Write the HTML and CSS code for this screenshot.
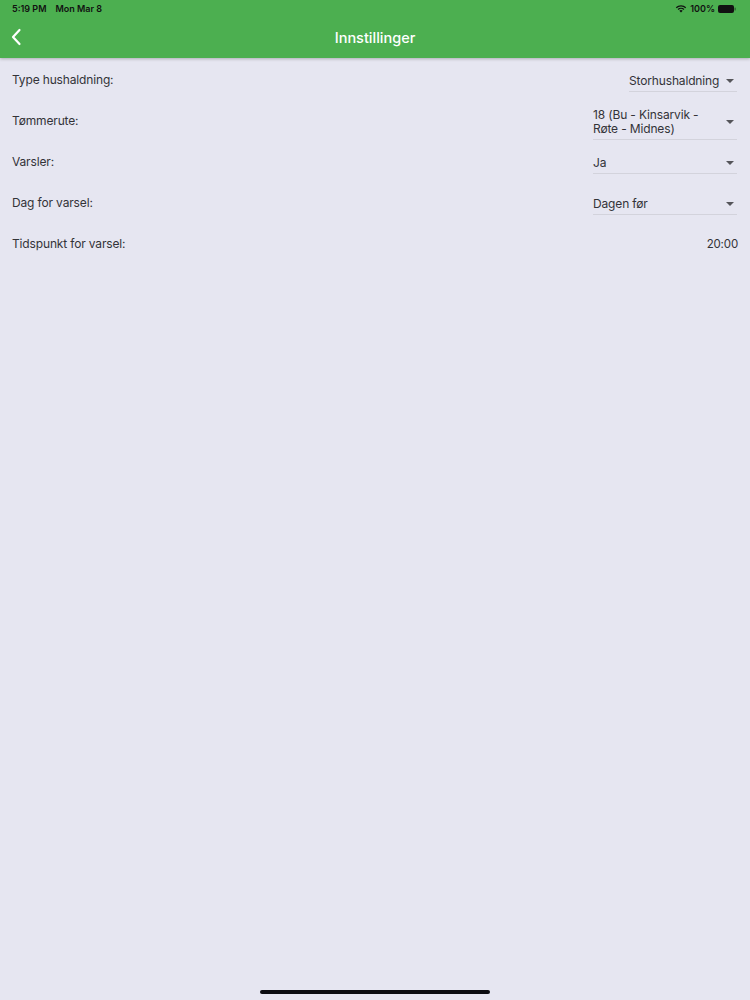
FILE: index.html
```html
<!DOCTYPE html>
<html lang="no">
<head>
<meta charset="utf-8">
<title>Innstillinger</title>
<link rel="stylesheet" href="styles.css">
</head>
<body>
<header class="top">
  <div class="status">
    <div class="status-left"><span>5:19 PM</span><span class="date">Mon Mar 8</span></div>
    <div class="status-right">
      <svg class="wifi" width="12" height="9" viewBox="0 0 12 9"><path d="M6 8.6 L4.3 6.8 A2.4 2.4 0 0 1 7.7 6.8 Z" fill="#111"/><path d="M2.6 5.1 A4.8 4.8 0 0 1 9.4 5.1 L8.5 6 A3.5 3.5 0 0 0 3.5 6 Z" fill="#111"/><path d="M0.8 3.3 A7.4 7.4 0 0 1 11.2 3.3 L10.3 4.2 A6.1 6.1 0 0 0 1.7 4.2 Z" fill="#111"/></svg>
      <span>100%</span>
      <svg class="battery" width="18" height="8" viewBox="0 0 18 8"><rect x="0" y="0" width="16" height="8" rx="2" fill="#111"/><rect x="16.5" y="2.5" width="1.3" height="3" rx="0.6" fill="#111" opacity="0.5"/></svg>
    </div>
  </div>
  <div class="appbar">
    <svg class="back" width="12" height="18" viewBox="0 0 12 18"><path d="M9.5 2 L3 9 L9.5 16" fill="none" stroke="#fff" stroke-width="2.2" stroke-linecap="round" stroke-linejoin="round"/></svg>
    <h1 class="title">Innstillinger</h1>
  </div>
</header>
<main class="settings">
  <div class="row">
    <span class="label">Type hushaldning:</span>
    <div class="dropdown narrow"><span class="value">Storhushaldning</span><span class="arrow"></span></div>
  </div>
  <div class="row">
    <span class="label">Tømmerute:</span>
    <div class="dropdown"><span class="value">18 (Bu - Kinsarvik -<br>Røte - Midnes)</span><span class="arrow"></span></div>
  </div>
  <div class="row">
    <span class="label">Varsler:</span>
    <div class="dropdown"><span class="value">Ja</span><span class="arrow"></span></div>
  </div>
  <div class="row">
    <span class="label">Dag for varsel:</span>
    <div class="dropdown"><span class="value">Dagen før</span><span class="arrow"></span></div>
  </div>
  <div class="row">
    <span class="label">Tidspunkt for varsel:</span>
    <span class="time">20:00</span>
  </div>
</main>
<div class="home-indicator"></div>
</body>
</html>
```
FILE: styles.css
```css
html, body {
  margin: 0;
  padding: 0;
}
body {
  width: 750px;
  height: 1000px;
  background: #e6e6f1;
  font-family: "Inter", "Liberation Sans", sans-serif;
  color: #333338;
  position: relative;
  overflow: hidden;
}
.top {
  background: #4caf50;
  height: 58px;
  box-shadow: 0 1px 3px rgba(0,0,0,0.25);
  position: relative;
  z-index: 1;
}
.status {
  height: 17px;
  display: flex;
  justify-content: space-between;
  align-items: center;
  padding: 0 12px 0 12px;
  font-size: 9px;
  font-weight: 600;
  color: #111;
}
.status-left .date {
  margin-left: 9px;
}
.status-right {
  display: flex;
  align-items: center;
  gap: 3px;
  padding-right: 2px;
}
.appbar {
  height: 41px;
  display: flex;
  align-items: center;
  justify-content: center;
  position: relative;
}
.back {
  position: absolute;
  left: 10px;
  top: 11px;
}
.title {
  margin: 0;
  font-size: 14.5px;
  font-weight: 500;
  color: #fff;
}
.settings {
  display: flex;
  flex-direction: column;
  padding: 0 13px 0 12px;
}
.row {
  display: flex;
  justify-content: space-between;
  align-items: center;
  height: 41px;
  font-size: 12px;
  letter-spacing: -0.15px;
  position: relative;
  top: 1px;
}
.dropdown {
  width: 144px;
  display: flex;
  align-items: center;
  justify-content: space-between;
  border-bottom: 1px solid #d3d3dc;
  padding: 4px 0 3px 0;
  position: relative;
  top: 1px;
}
.dropdown.narrow {
  width: 108px;
}
.value {
  line-height: 14px;
}
.arrow {
  width: 0;
  height: 0;
  border-left: 4px solid transparent;
  border-right: 4px solid transparent;
  border-top: 4px solid #55555a;
  margin-right: 3px;
}
.time {
  font-size: 11.5px;
  margin-right: -1px;
}
.home-indicator {
  position: absolute;
  left: 260px;
  bottom: 6px;
  width: 230px;
  height: 4px;
  border-radius: 2px;
  background: #0c0c12;
}
```
